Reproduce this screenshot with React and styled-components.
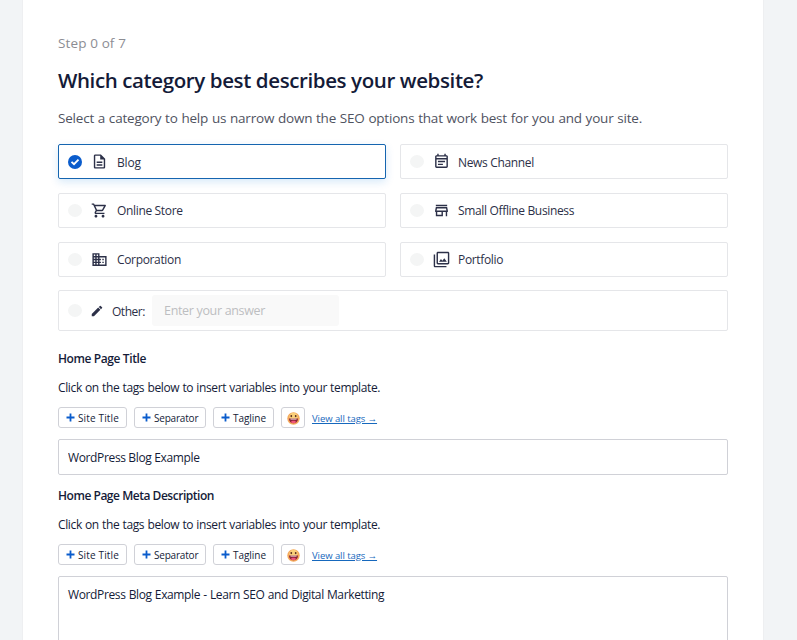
import React from 'react';
import styled, { createGlobalStyle } from 'styled-components';
import {
  MdOutlineDescription,
  MdOutlineShoppingCart,
  MdDomain,
  MdOutlineEventNote,
  MdOutlineStore,
  MdOutlineFilter,
  MdEdit,
} from 'react-icons/md';

const GlobalStyle = createGlobalStyle`
  *, *::before, *::after { box-sizing: border-box; }
  body {
    margin: 0;
    background: #f2f4f6;
    color: #141b38;
    font-family: "Open Sans", "Noto Sans", sans-serif;
    font-size: 12px;
    overflow: hidden;
  }
`;

const Page = styled.div`
  height: 640px;
  padding: 0 34px 0 23px;
  overflow: hidden;
`;

const Card = styled.main`
  height: 700px;
  padding: 34px 35px 0;
  background: #fff;
  box-shadow: 0 0 0 1px #eeeff1;
`;

const Step = styled.p`
  margin: 0;
  height: 18px;
  line-height: 18px;
  font-size: 13.5px;
  font-weight: 500;
  letter-spacing: 0.12px;
  color: #8c8d93;
`;

const Title = styled.h1`
  margin: 13px 0 0;
  height: 30px;
  line-height: 30px;
  font-size: 20.5px;
  font-weight: 600;
  letter-spacing: -0.39px;
  white-space: nowrap;
`;

const Intro = styled.p`
  margin: 13px 0 0;
  height: 20px;
  line-height: 20px;
  font-size: 13.5px;
  letter-spacing: -0.2px;
  word-spacing: 0.45px;
  color: #50535f;
  white-space: nowrap;
`;

const Options = styled.div`
  margin-top: 16px;
  display: grid;
  grid-template-columns: 1fr 1fr;
  grid-auto-rows: 35px;
  gap: 14px;
`;

const OptionBox = styled.label`
  display: flex;
  align-items: center;
  padding-left: 9px;
  border: 1px solid ${(p) => (p.$selected ? '#1565b0' : '#e5e6e9')};
  border-radius: 2px;
  box-shadow: ${(p) => (p.$selected ? '0 3px 9px rgba(0, 120, 220, 0.16)' : 'none')};
`;

const OtherBox = styled(OptionBox)`
  height: 41px;
  margin-top: 13px;
`;

const Radio = styled.span`
  flex: none;
  display: flex;
  align-items: center;
  justify-content: center;
  width: 14px;
  height: ${(p) => (p.$selected ? '14px' : '13px')};
  border-radius: 50%;
  background: ${(p) => (p.$selected ? '#0a5ccc' : '#f4f5f5')};
`;

const IconSlot = styled.span`
  flex: none;
  display: flex;
  align-items: center;
  justify-content: center;
  width: ${(p) => p.$width || 18}px;
  margin-left: 8px;
  color: #2c3048;
`;

const OptionLabel = styled.span`
  margin-left: ${(p) => p.$gap}px;
  padding-top: ${(p) => (p.$lowered ? 2 : 0)}px;
  letter-spacing: ${(p) => p.$track || -0.34}px;
  line-height: 18px;
  color: #2c3048;
`;

const AnswerInput = styled.input`
  width: 187px;
  height: 31px;
  margin: 0 0 1px 7px;
  padding: 0 12px;
  border: 0;
  border-radius: 3px;
  background: #f9f9f9;
  font: 12.5px "Open Sans", sans-serif;
  letter-spacing: -0.33px;
  &::placeholder { color: #bdbec1; opacity: 1; }
`;

const Field = styled.section`
  margin-top: ${(p) => p.$top}px;
`;

const FieldTitle = styled.h2`
  margin: 0;
  height: 18px;
  line-height: 18px;
  font-size: 12px;
  font-weight: 600;
  letter-spacing: ${(p) => p.$track}px;
`;

const Hint = styled.p`
  margin: 11px 0 0;
  height: 18px;
  line-height: 18px;
  letter-spacing: -0.37px;
  word-spacing: 0.45px;
`;

const Tags = styled.div`
  margin-top: 10px;
  display: flex;
  align-items: center;
  gap: 7px;
`;

const TagButton = styled.button`
  display: flex;
  align-items: center;
  justify-content: flex-start;
  width: ${(p) => p.$width}px;
  height: 21px;
  padding: 0 0 0 7px;
  border: 1px solid #d0d1d7;
  border-radius: 3px;
  background: #fff;
  color: #141b38;
  font: 500 10px "Open Sans", sans-serif;
  letter-spacing: ${(p) => p.$track}px;
  white-space: nowrap;
`;

const EmojiButton = styled(TagButton)`
  justify-content: center;
  padding: 2px 0 0;
`;

const PlusIcon = styled.svg`
  flex: none;
  width: 9px;
  height: 9px;
  margin: 0 3px ${(p) => p.$lift}px 0;
`;

const TagText = styled.span`
  padding-top: 1px;
`;

const TagsLink = styled.a`
  color: #1668bd;
  font-size: 9.5px;
  line-height: 14px;
  letter-spacing: -0.07px;
  padding-top: 2px;
  text-decoration: underline;
  text-underline-offset: 1px;
  white-space: nowrap;
`;

const control = `
  display: block;
  width: 100%;
  margin-top: 11px;
  border: 1px solid #d0d1d7;
  border-radius: 2px;
  outline: 0;
  background: #fff;
  color: #141b38;
  font: 12px "Open Sans", sans-serif;
`;

const TextInput = styled.input`
  ${control}
  height: 36px;
  padding: 0 9px;
  letter-spacing: -0.36px;
`;

const TextArea = styled.textarea`
  ${control}
  height: 110px;
  padding: 9px;
  line-height: 18px;
  letter-spacing: -0.37px;
  word-spacing: 0.4px;
  resize: none;
`;

const Check = () => (
  <svg width="10" height="10" viewBox="0 0 10 10" fill="none" stroke="#fff" strokeWidth="1.9">
    <path d="M1.5 4.900 4 7.200 8.500 2.700" />
  </svg>
);

const Emoji = () => (
  <svg width="13" height="13" viewBox="0 0 13 13">
    <circle cx="6.5" cy="6.5" r="6.2" fill="#f5a95c" />
    <circle cx="6.5" cy="5" r="4.2" fill="#fad07a" />
    <ellipse cx="4.3" cy="4.1" rx="0.9" ry="1.1" fill="#5b3021" />
    <ellipse cx="8.7" cy="4.1" rx="0.9" ry="1.1" fill="#5b3021" />
    <path d="M2 6.5h9c0 3-1.900 4.800-4.500 4.800S2 9.500 2 6.500z" fill="#8b2338" />
    <path d="M3.500 6.700h6v0.800h-6z" fill="#fff" />
    <path d="M3.800 9.900c1-1.600 4.400-1.600 5.400 0-1.200 1.600-4.200 1.600-5.400 0z" fill="#f0567a" />
  </svg>
);

const Option = ({ icon: Icon, label, selected, size = 17, track, gap = 9, lowered }) => (
  <OptionBox $selected={selected}>
    <Radio $selected={selected}>{selected && <Check />}</Radio>
    <IconSlot><Icon size={size} /></IconSlot>
    <OptionLabel $track={track} $gap={gap} $lowered={lowered}>{label}</OptionLabel>
  </OptionBox>
);

const options = [
  { label: 'Blog', icon: MdOutlineDescription, selected: true, track: -0.13, lowered: true },
  { label: 'News Channel', icon: MdOutlineEventNote, gap: 8, lowered: true },
  { label: 'Online Store', icon: MdOutlineShoppingCart },
  { label: 'Small Offline Business', icon: MdOutlineStore, gap: 8 },
  { label: 'Corporation', icon: MdDomain },
  { label: 'Portfolio', icon: MdOutlineFilter, gap: 8 },
];

const tags = [
  { label: 'Site Title', width: 69, track: 0.14 },
  { label: 'Separator', width: 72, track: -0.2 },
  { label: 'Tagline', width: 61, track: -0.04 },
];

const TemplateField = ({ title, track, top, lift, children }) => (
  <Field $top={top}>
    <FieldTitle $track={track}>{title}</FieldTitle>
    <Hint>Click on the tags below to insert variables into your template.</Hint>
    <Tags>
      {tags.map((t) => (
        <TagButton key={t.label} $width={t.width} $track={t.track}>
          <PlusIcon $lift={lift} viewBox="0 0 9 9" stroke="#0a5ccc" strokeWidth="1.8">
            <path d="M4.500 0.500v8M0.500 4.500h8" />
          </PlusIcon>
          <TagText>{t.label}</TagText>
        </TagButton>
      ))}
      <EmojiButton $width={24} aria-label="Insert emoji"><Emoji /></EmojiButton>
      <TagsLink>View all tags →</TagsLink>
    </Tags>
    {children}
  </Field>
);

export default function App() {
  return (
    <>
      <GlobalStyle />
      <Page>
        <Card>
          <Step>Step 0 of 7</Step>
          <Title>Which category best describes your website?</Title>
          <Intro>
            Select a category to help us narrow down the SEO options that work best for you and your site.
          </Intro>
          <Options>
            {options.map((o) => <Option key={o.label} {...o} />)}
          </Options>
          <OtherBox as="div">
            <Radio />
            <IconSlot $width={14}><MdEdit size={14} /></IconSlot>
            <OptionLabel $gap={8} $track={-0.46} $lowered>Other:</OptionLabel>
            <AnswerInput placeholder="Enter your answer" />
          </OtherBox>
          <TemplateField title="Home Page Title" track={-0.4} top={19} lift={1}>
            <TextInput defaultValue="WordPress Blog Example" />
          </TemplateField>
          <TemplateField title="Home Page Meta Description" track={-0.47} top={12} lift={0}>
            <TextArea defaultValue="WordPress Blog Example - Learn SEO and Digital Marketting" />
          </TemplateField>
        </Card>
      </Page>
    </>
  );
}
